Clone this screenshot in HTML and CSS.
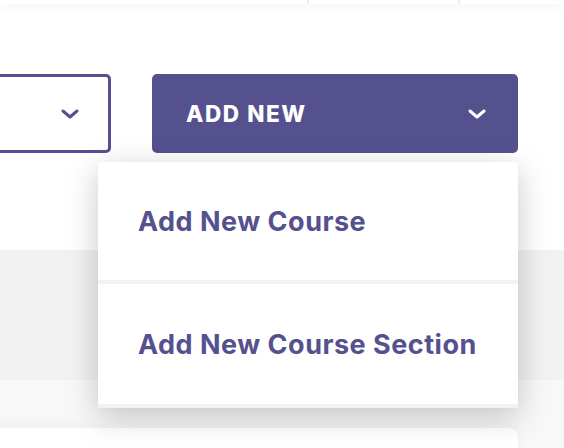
FILE: index.html
```html
<!DOCTYPE html>
<html lang="en">
<head>
    <meta charset="UTF-8">
    <meta name="viewport" content="width=device-width, initial-scale=1.0">
    <title>Courses</title>
    <link rel="stylesheet" href="styles.css">
</head>
<body>
    <div class="topbar">
        <div class="topcell wide"></div>
        <div class="topcell mid"></div>
        <div class="topcell"></div>
    </div>

    <div class="toolbar">
        <div class="select">
            <svg class="chev" width="18" height="10" viewBox="0 0 18 10"><path d="M2 2 L9 8 L16 2" fill="none" stroke="#55518f" stroke-width="3" stroke-linecap="round" stroke-linejoin="round"/></svg>
        </div>
        <div class="addwrap">
            <button class="addbtn">
                <span>ADD NEW</span>
                <svg class="chev" width="18" height="10" viewBox="0 0 18 10"><path d="M2 2 L9 8 L16 2" fill="none" stroke="#ffffff" stroke-width="3" stroke-linecap="round" stroke-linejoin="round"/></svg>
            </button>
            <ul class="menu">
                <li>Add New Course</li>
                <li>Add New Course Section</li>
            </ul>
        </div>
    </div>

    <div class="band"></div>

    <div class="content">
        <div class="card"></div>
    </div>
</body>
</html>
```

FILE: styles.css
```css
body {
    margin: 0;
    padding: 0;
    font-family: Inter, "Noto Sans", sans-serif;
    background: #ffffff;
    height: 448px;
    overflow: hidden;
}

.topbar {
    display: flex;
    height: 4px;
    background: #ffffff;
    box-shadow: 0 2px 10px rgba(0, 0, 0, 0.07);
    position: relative;
    z-index: 1;
}

.topcell {
    flex: 1;
}

.topcell.wide {
    flex: 0 0 307px;
    border-right: 2px solid #eeeeee;
}

.topcell.mid {
    flex: 0 0 149px;
    border-right: 2px solid #eeeeee;
}

.toolbar {
    display: flex;
    align-items: flex-start;
    gap: 41px;
    padding-top: 70px;
    height: 176px;
}

.select {
    box-sizing: border-box;
    width: 152px;
    height: 79px;
    margin-left: -41px;
    border: 3px solid #55518f;
    border-radius: 5px;
    display: flex;
    align-items: center;
    justify-content: flex-end;
    padding-right: 29px;
}

.addwrap {
    position: relative;
}

.addbtn {
    box-sizing: border-box;
    width: 366px;
    height: 79px;
    border: none;
    border-radius: 5px;
    background: #55518f;
    color: #ffffff;
    font-family: Inter, "Noto Sans", sans-serif;
    font-size: 22.5px;
    font-weight: 800;
    letter-spacing: 1.6px;
    display: flex;
    align-items: center;
    justify-content: space-between;
    padding: 0 32px 0 34px;
}

.chev {
    display: block;
}

.menu {
    position: absolute;
    top: 88px;
    left: -54px;
    width: 420px;
    margin: 0;
    padding: 0;
    list-style: none;
    background: #ffffff;
    box-shadow: 0 8px 30px rgba(0, 0, 0, 0.22);
    z-index: 2;
}

.menu li {
    height: 118px;
    display: flex;
    align-items: center;
    padding-left: 40px;
    border-bottom: 4px solid #f2f2f2;
    color: #55518f;
    font-size: 27px;
    font-weight: 700;
    letter-spacing: 0.5px;
}

.menu li + li {
    height: 120px;
}

.band {
    height: 130px;
    background: #f2f2f2;
}

.content {
    background: #f8f8f8;
    padding-top: 48px;
}

.card {
    height: 20px;
    margin-left: -20px;
    margin-right: 46px;
    background: #ffffff;
    border-radius: 9px 9px 0 0;
    box-shadow: 0 0 18px rgba(0, 0, 0, 0.05);
}
```
